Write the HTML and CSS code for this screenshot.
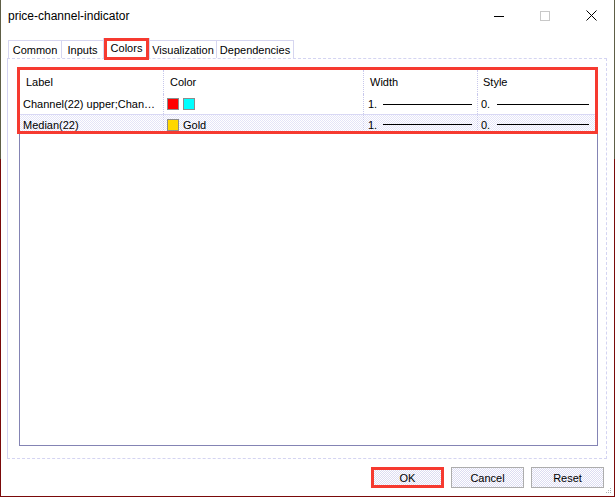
FILE: index.html
```html
<!DOCTYPE html>
<html lang="en">
<head>
    <meta charset="UTF-8">
    <title>price-channel-indicator</title>
    <link rel="stylesheet" href="styles.css">
</head>
<body>
    <div class="window">
        <div class="titlebar">
            <span class="title">price-channel-indicator</span>
            <div class="controls">
                <span class="ctrl">
                    <svg width="10" height="10" viewBox="0 0 10 10"><path d="M0 5.5H10" stroke="#000" stroke-width="1"/></svg>
                </span>
                <span class="ctrl">
                    <svg width="10" height="10" viewBox="0 0 10 10"><rect x="0.5" y="0.5" width="9" height="9" fill="none" stroke="#c8c8c8"/></svg>
                </span>
                <span class="ctrl">
                    <svg width="11" height="11" viewBox="0 0 11 11"><path d="M0.5 0.5L10.5 10.5M10.5 0.5L0.5 10.5" stroke="#000" stroke-width="1"/></svg>
                </span>
            </div>
        </div>

        <div class="tabs">
            <div class="tab tab-common">Common</div>
            <div class="tab tab-inputs">Inputs</div>
            <div class="tab tab-colors active">Colors</div>
            <div class="tab tab-vis">Visualization</div>
            <div class="tab tab-deps">Dependencies</div>
        </div>

        <div class="panel">
            <div class="list">
                <div class="row head">
                    <div class="cell c-label">Label</div>
                    <div class="cell c-color">Color</div>
                    <div class="cell c-width">Width</div>
                    <div class="cell c-style">Style</div>
                </div>
                <div class="row">
                    <div class="cell c-label">Channel(22) upper;Chan…</div>
                    <div class="cell c-color">
                        <span class="swatch red"></span>
                        <span class="swatch cyan"></span>
                    </div>
                    <div class="cell c-width">1.<span class="line w"></span></div>
                    <div class="cell c-style">0.<span class="line s"></span></div>
                </div>
                <div class="row alt">
                    <div class="cell c-label">Median(22)</div>
                    <div class="cell c-color">
                        <span class="swatch gold"></span>
                        <span class="swatch-name">Gold</span>
                    </div>
                    <div class="cell c-width">1.<span class="line w"></span></div>
                    <div class="cell c-style">0.<span class="line s"></span></div>
                </div>
                <div class="mark"></div>
            </div>
        </div>

        <div class="footer">
            <button class="btn btn-ok">OK</button>
            <button class="btn">Cancel</button>
            <button class="btn">Reset</button>
        </div>

        <svg class="grip" width="6" height="6" viewBox="0 0 6 6">
            <rect x="4" y="0" width="1" height="1" fill="#b0b0b0"/>
            <rect x="2" y="2" width="1" height="1" fill="#b0b0b0"/>
            <rect x="4" y="2" width="1" height="1" fill="#b0b0b0"/>
            <rect x="0" y="4" width="1" height="1" fill="#b0b0b0"/>
            <rect x="2" y="4" width="1" height="1" fill="#b0b0b0"/>
            <rect x="4" y="4" width="1" height="1" fill="#b0b0b0"/>
        </svg>
    </div>
</body>
</html>
```

FILE: styles.css
```css
* {
    box-sizing: border-box;
    margin: 0;
    padding: 0;
}
body {
    width: 615px;
    height: 497px;
    overflow: hidden;
    font-family: 'Liberation Sans', Arial, sans-serif;
    font-size: 11px;
    color: #000;
    background: #fff;
}

.window {
    position: relative;
    display: flex;
    flex-direction: column;
    height: 497px;
    background: #fff;
    border-left: 1px solid #5e5e46;
    border-right: 1px solid #7a0a0a;
    border-bottom: 1px solid #7a0a0a;
    border-image: linear-gradient(to bottom, #5e5e46 0, #5e5e46 160px, #7a0a0a 160px) 1;
    border-top: none;
}

/* title bar */
.titlebar {
    display: flex;
    align-items: center;
    height: 31px;
    flex: none;
}
.title {
    padding-left: 7px;
    font-size: 12px;
    color: #000;
}
.controls {
    display: flex;
    margin-left: auto;
    height: 31px;
}
.ctrl {
    width: 46px;
    height: 31px;
    display: flex;
    align-items: center;
    justify-content: center;
}

/* tabs */
.tabs {
    display: flex;
    align-items: flex-end;
    height: 20px;
    margin-top: 7px;
    padding-left: 7px;
    flex: none;
    position: relative;
    z-index: 2;
}
.tab {
    height: 18px;
    border-top: 1px solid #d6d6f0;
    border-right: 1px solid #d6d6f0;
    display: flex;
    align-items: center;
    justify-content: center;
    background: #fff;
}
.tab-common { width: 54px; border-left: 1px solid #d6d6f0; }
.tab-inputs { width: 41px; border-right: none; }
.tab-colors { width: 47px; }
.tab-vis { width: 67px; }
.tab-deps { width: 77px; }
.tab.active {
    position: relative;
    height: 21px;
    margin-bottom: -1px;
    border-left: 1px solid #d6d6f0;
    padding-bottom: 3px;
}
.tab.active::after {
    content: '';
    position: absolute;
    left: 0;
    right: 0;
    top: -1px;
    bottom: -1px;
    border: 3px solid #f63a30;
}

/* tab page */
.panel {
    display: flex;
    flex-direction: column;
    height: 401px;
    margin: 0 7px 0 6px;
    padding: 10px 8px 12px 11px;
    border: 1px dashed #d4d4f2;
    border-left-style: solid;
    flex: none;
}
.list {
    position: relative;
    flex: 1;
    border: 1px solid #8484b4;
}
.row {
    display: grid;
    grid-template-columns: 143px 200px 114px 1fr;
    height: 20px;
}
.row.head {
    height: 24px;
}
.row.alt {
    border-top: 1px solid #d8d8f4;
    background: repeating-conic-gradient(#e4e4f8 0 25%, #fff 0 50%) 0 0 / 2px 2px;
}
.cell {
    display: flex;
    align-items: center;
    white-space: nowrap;
    overflow: hidden;
}
.cell + .cell {
    border-left: 1px dotted #c8c8ec;
}
.c-label { padding-left: 3px; }
.c-color { padding-left: 3px; }
.c-width { padding-left: 4px; }
.c-style { padding-left: 3px; }
.head .c-label { padding-left: 6px; }
.head .c-color { padding-left: 6px; }
.head .c-width { padding-left: 6px; }
.head .c-style { padding-left: 5px; }

.swatch {
    width: 12px;
    height: 12px;
    border: 1px solid #8c8c8c;
    margin-right: 4px;
}
.swatch.red { background: #ff0000; }
.swatch.cyan { background: #00ffff; }
.swatch.gold { background: #ffd700; }

.line {
    height: 1px;
    background: #000;
    margin-left: 6px;
}
.line.w { width: 89px; }
.line.s { width: 92px; margin-left: 7px; }

/* red annotation around the list rows */
.mark {
    position: absolute;
    left: -3px;
    top: -3px;
    width: 581px;
    height: 67px;
    border: 3px solid #f63a30;
}

/* buttons */
.footer {
    display: flex;
    justify-content: flex-end;
    gap: 7px;
    padding: 8px 10px 0 0;
}
.btn {
    width: 73px;
    height: 21px;
    border: 1px solid #adadad;
    background: repeating-conic-gradient(#dcdcf2 0 25%, #fff 0 50%) 0 0 / 2px 2px;
    font-family: 'Liberation Sans', Arial, sans-serif;
    font-size: 11px;
    color: #000;
}
.btn-ok {
    border: 3px solid #f63a30;
}

.grip {
    position: absolute;
    right: 2px;
    bottom: 2px;
}
```
